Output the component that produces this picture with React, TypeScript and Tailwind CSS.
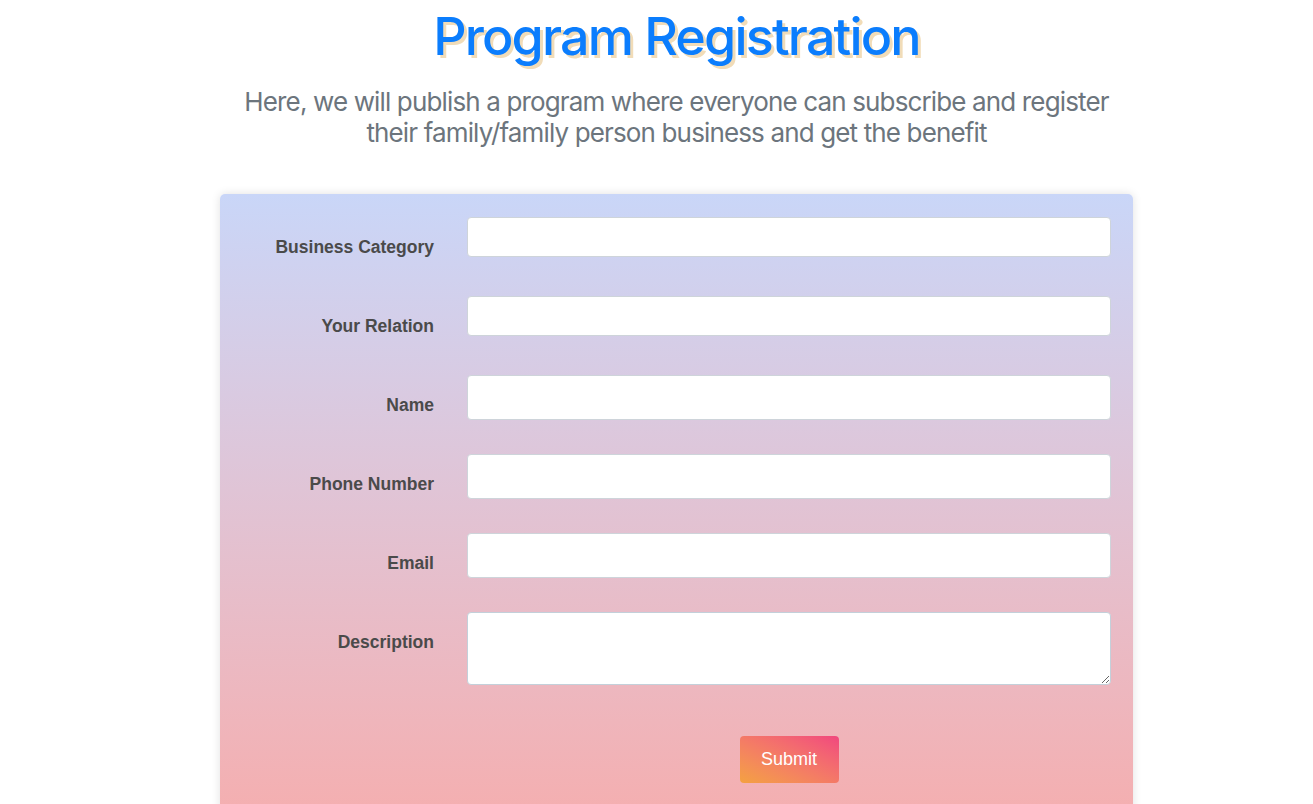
import React from 'react';

const fields = [
  { label: 'Business Category', h: 'h-[40px]' },
  { label: 'Your Relation', h: 'h-[40px]' },
  { label: 'Name', h: 'h-[45px]' },
  { label: 'Phone Number', h: 'h-[45px]' },
  { label: 'Email', h: 'h-[45px]' },
];

export default function App() {
  return (
    <div className="min-h-screen bg-white pl-10 overflow-hidden">
      <div className="mx-auto w-[913px] flex flex-col items-center">
        <h1
          className="mt-[6px] text-[52px] leading-[62px] font-medium tracking-[-0.035em] text-[#0b7dfd]"
          style={{ fontFamily: 'Inter, sans-serif', textShadow: '3px 3px 0 #f1dcb8' }}
        >
          Program Registration
        </h1>
        <p
          className="mt-[18px] w-[880px] text-center text-[26px] leading-[31px] tracking-[-0.033em] text-[#6c757d]"
          style={{ fontFamily: 'Inter, sans-serif' }}
        >
          Here, we will publish a program where everyone can subscribe and register their family/family person business and get the benefit
        </p>

        <form
          className="mt-[46px] w-[913px] rounded-[5px] bg-gradient-to-b from-[#c9d6f8] to-[#f5aeaf] pt-[23px] pb-[40px] shadow-[0_0_10px_rgba(0,0,0,0.12)]"
          style={{ fontFamily: '"Liberation Sans", Arial, sans-serif' }}
          onSubmit={(e) => e.preventDefault()}
        >
          {fields.map((f) => (
            <div key={f.label} className="flex items-start h-[79px]">
              <label className="w-[214px] pt-[20px] text-right text-[17.5px] leading-[20px] font-bold text-[#4a4a4a]">
                {f.label}
              </label>
              <input
                type="text"
                className={`ml-[33px] w-[644px] ${f.h} rounded-[4px] border border-[#ced4da] bg-white px-3 outline-none`}
              />
            </div>
          ))}
          <div className="flex items-start">
            <label className="w-[214px] pt-[20px] text-right text-[17.5px] leading-[20px] font-bold text-[#4a4a4a]">
              Description
            </label>
            <textarea className="ml-[33px] w-[644px] h-[73px] rounded-[4px] border border-[#c3d0da] bg-white px-3 py-2 outline-none" />
          </div>
          <div className="flex mt-[51px]">
            <div className="w-[247px]" />
            <div className="w-[644px] flex justify-center">
              <button
                type="submit"
                className="w-[99px] h-[47px] rounded-[4px] bg-gradient-to-tr from-[#f4a13f] to-[#f1467e] text-white text-[18px]"
              >
                Submit
              </button>
            </div>
          </div>
        </form>
      </div>
    </div>
  );
}
